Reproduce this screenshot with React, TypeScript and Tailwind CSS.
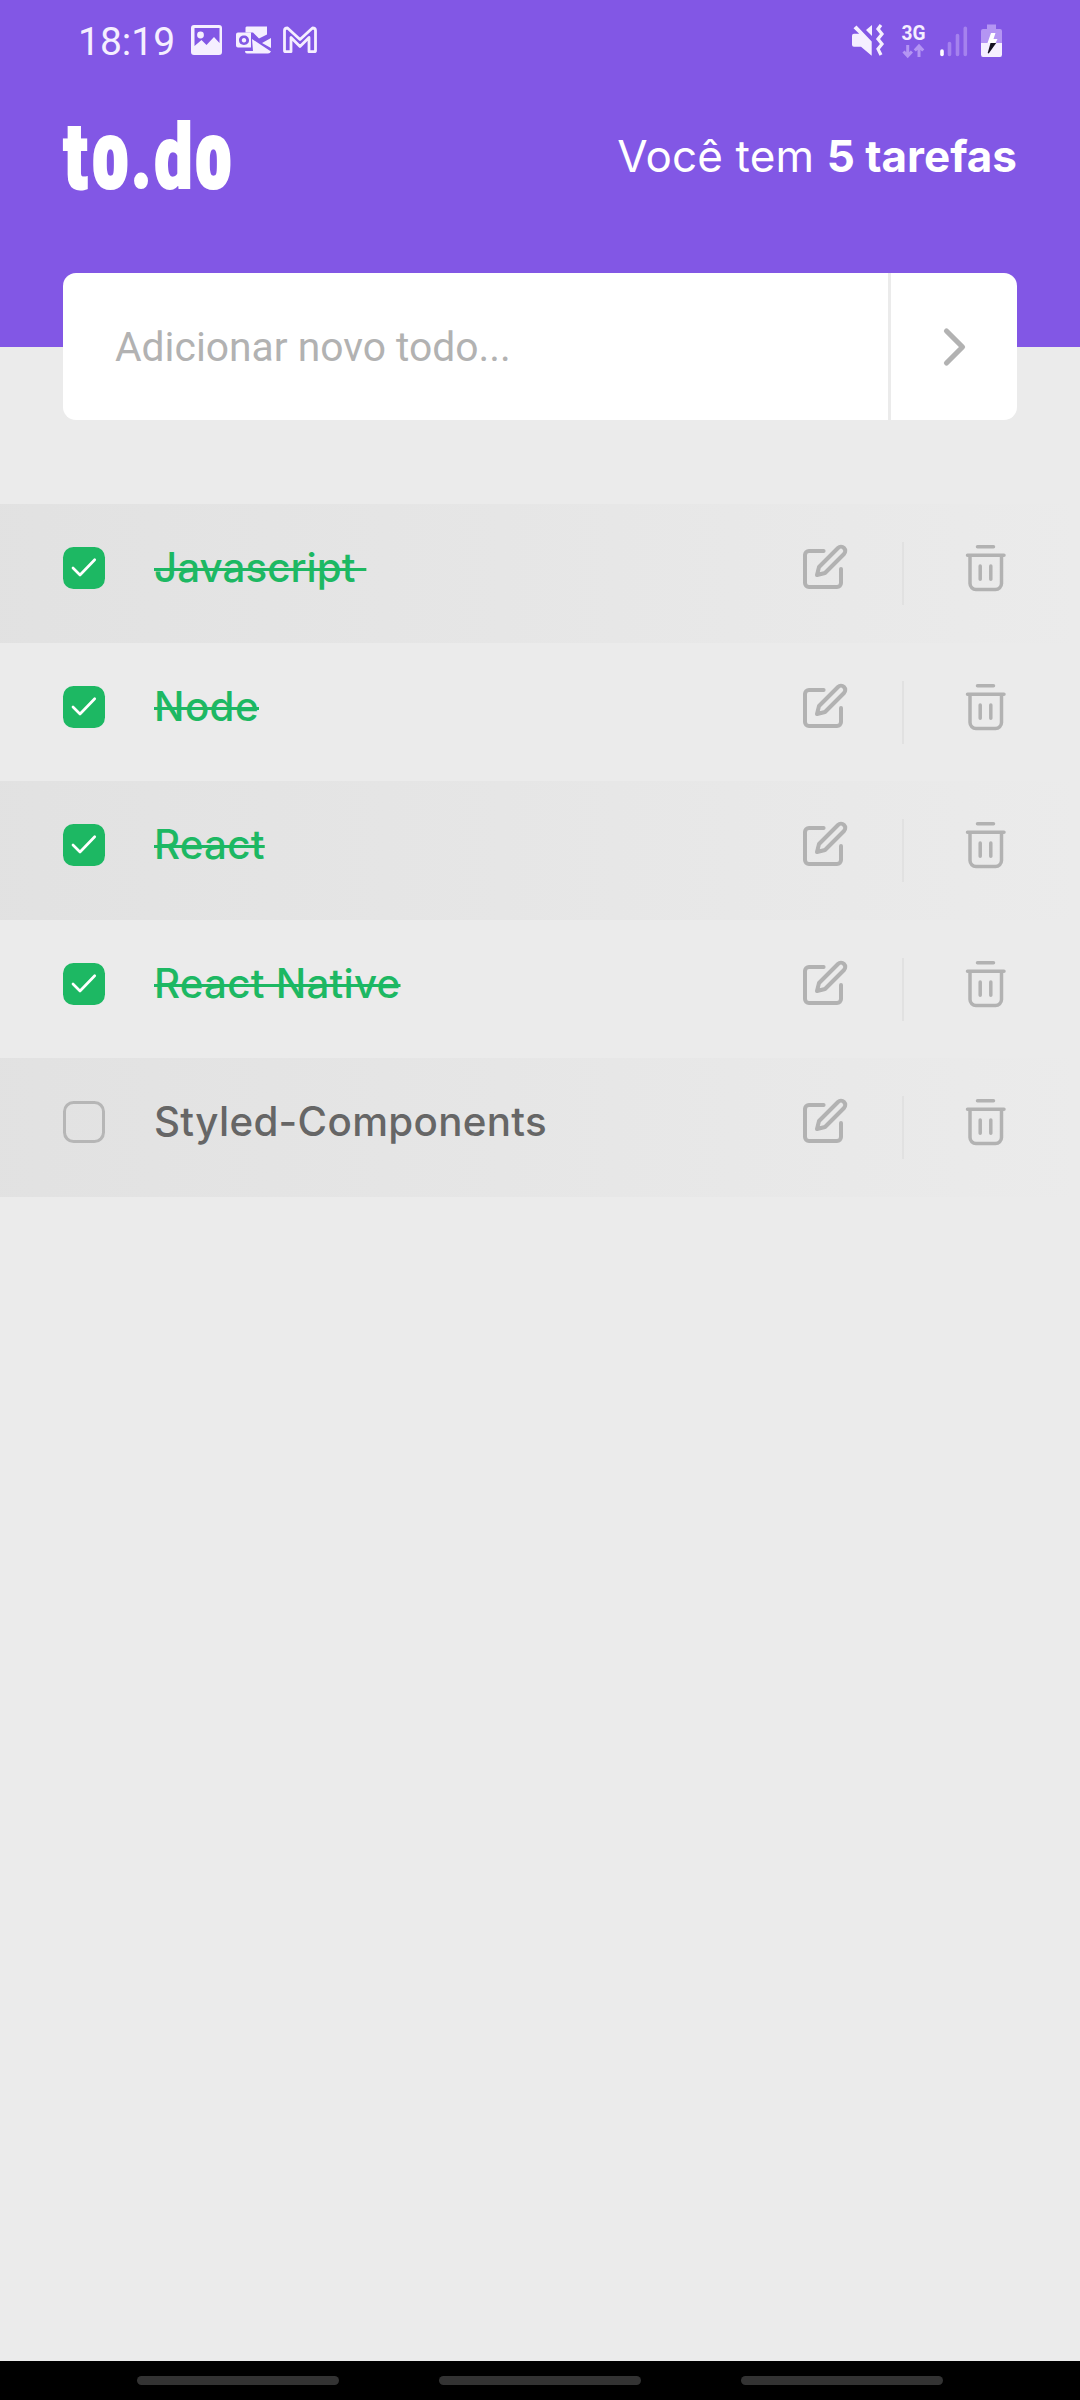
import React from "react";

const tasks = [
  { title: "Javascript ", done: true, tracking: "tracking-[0.050px]" },
  { title: "Node", done: true, tracking: "tracking-[0.400px]" },
  { title: "React", done: true, tracking: "tracking-[0.250px]" },
  { title: "React Native", done: true, tracking: "tracking-[0.250px]" },
  { title: "Styled-Components", done: false, tracking: "tracking-[0.330px]" },
];

function StatusBar() {
  return (
    <div className="flex h-[82px] items-start justify-between pl-[78px] pr-[75px] text-[#f5efff]">
      <div className="flex items-start">
        <span className="mt-[19px] w-[112px] whitespace-nowrap font-['Roboto',sans-serif] text-[39px] leading-[46px]">18:19</span>
        <svg className="mt-[20px]" width="150" height="40" viewBox="190 20 150 40" fill="currentColor">
          <path fillRule="evenodd" d="M194 25h25a3 3 0 0 1 3 3v24a3 3 0 0 1-3 3h-25a3 3 0 0 1-3-3V28a3 3 0 0 1 3-3zM194.500 28v18l7-6 5 5 7.500-8 5.500 6V28z" />
          <circle cx="200.500" cy="35" r="3.400" />
          <path d="M246.500 26.500h20.500v8l-8 4-6-6h-7.500v-5zM252 39l19 12.500q-1 2-3 2h-21q-2 0-2-2.500h8zM271 38v10l-9-5z" />
          <path fillRule="evenodd" d="M238 32.500h13v15h-13q-2 0-2-2v-11q0-2 2-2zm6 3c-3 0-5 2-5 4.800s2 4.700 5 4.700 5-2 5-4.700-2-4.800-5-4.800zm0 2.500c1.500 0 2.200 1 2.200 2.300s-.7 2.200-2.200 2.200-2.200-.9-2.200-2.200.7-2.300 2.200-2.300z" />
          <path d="M284.500 50.500V30.500q0-2.500 3-2.500l12.500 11.500 12.500-11.500q3 0 3 2.500v20q0 1.200-1.200 1.200h-5.300V37.500L300 46.500l-9-9v14.200h-5.300q-1.200 0-1.200-1.200z" fill="none" stroke="currentColor" strokeWidth="2.800" strokeLinejoin="round" />
        </svg>
      </div>
      <svg className="mt-[15px]" width="155" height="50" viewBox="850 15 155 50" fill="currentColor">
        <path d="M853.500 28.300l3-2.800 15.200 16v14.300l-10.700-9.100h-7q-2 0-2-2v-9q0-2 2-2h5.200zM866 30l6-5v11z" />
        <path d="M881 25l-3 4 4 5-4 5 4 5-4 5 3 6" fill="none" stroke="currentColor" strokeWidth="3.200" />
        <text x="901.500" y="39.700" fontFamily="Roboto" fontWeight="700" fontSize="19.500" textLength="24" lengthAdjust="spacingAndGlyphs">3G</text>
        <g fill="none" stroke="#b495f3" strokeWidth="3">
          <path d="M907.700 45v11M903.500 51.500l4.200 4.500 4.200-4.500M919 57V46M914.800 50.500L919 46l4.200 4.500" />
        </g>
        <g strokeLinecap="round" strokeWidth="3.600">
          <path d="M942 51v3.500" stroke="#fff" />
          <path d="M949.500 43.500v11M957.500 35.500v19M965.300 28.200v26.300" stroke="#a582ee" />
        </g>
        <path d="M987 29v-4.500h9V29h4q2 0 2 2v12h-21V31q0-2 2-2z" fill="#b495f3" />
        <path d="M981 43h21v11.500q0 2.500-2 2.500h-17q-2 0-2-2.500z" />
        <path d="M991 33h4.500l-2 6h4l-2 4h-8z" fill="#fff" />
        <path d="M990.500 43h5.700l-7.500 10.500-1-.5z" fill="#141021" />
      </svg>
    </div>
  );
}

function Logo() {
  return (
    <svg className="h-[80px] w-[176px]" viewBox="60 115 176 80" fill="#fff" role="img" overflow="visible">
      <g transform="translate(63.300 187.700) scale(0.77 1)">
        <text y="0" fontFamily="Roboto" fontWeight="900" fontSize="96.500" stroke="#fff" strokeWidth="2" style={{ fontStretch: "78%" }}>
          <tspan x="0" fontSize="92.500" style={{ fontStretch: "100%" }}>t</tspan>
          <tspan x="37.300">o</tspan>
          <tspan x="88" fontSize="88">.</tspan>
          <tspan x="118" fontSize="88.500" style={{ fontStretch: "88%" }}>d</tspan>
          <tspan x="171">o</tspan>
        </text>
      </g>
    </svg>
  );
}

function EditIcon() {
  return (
    <svg width="50" height="50" viewBox="0 0 25 25" fill="none" stroke="#b2b2b2" strokeWidth="2" strokeLinecap="round" strokeLinejoin="round">
      <path d="M11.300 4H4a2 2 0 0 0-2 2v14a2 2 0 0 0 2 2h14a2 2 0 0 0 2-2v-7" />
      <path d="M18.500 2.500a2.121 2.121 0 0 1 3 3L12 15l-4 1 1-4z" />
    </svg>
  );
}

function TrashIcon() {
  return (
    <svg width="42" height="50" viewBox="965 543 42 50" fill="none" stroke="#b2b2b2" strokeWidth="3.500" strokeLinecap="round" strokeLinejoin="round">
      <path d="M977.500 546.800h16M967.500 555.300h36.500M970 555.300v28.200a6 6 0 0 0 6 6h19.500a6 6 0 0 0 6-6v-28.200M980.200 566v13.200M990.800 566v13.200" />
    </svg>
  );
}

type TaskRowProps = { title: string; done: boolean; tracking: string; striped: boolean };

function TaskRow({ title, done, tracking, striped }: TaskRowProps) {
  return (
    <li className={"flex h-[138.600px] items-start " + (striped ? "bg-[linear-gradient(90deg,rgba(196,196,196,0.24),rgba(196,196,196,0))]" : "")}>
      <span
        className={
          "ml-[63px] mt-[43px] flex size-[42px] shrink-0 items-center justify-center rounded-[10.500px] " +
          (done ? "bg-[#1db863]" : "border-[3px] border-[#b6b6b6]")
        }
      >
        {done && (
          <svg width="42" height="42" viewBox="0 0 42 42" fill="none" stroke="#fff" strokeWidth="2.700" strokeLinecap="round" strokeLinejoin="round">
            <path d="M10 21l7 7L31.700 12.800" />
          </svg>
        )}
      </span>
      <span
        className={
          "ml-[49px] mt-[40px] w-[647px] whitespace-pre font-['Inter',sans-serif] text-[40.300px] font-medium leading-[48px] " +
          tracking +
          (done ? " text-[#1db863] line-through decoration-[2.600px]" : " text-[#666666]")
        }
      >
        {title}
      </span>
      <span className="mt-[39px]"><EditIcon /></span>
      <span className="ml-[51px] mt-[38px] h-[63px] w-[2px] bg-[#e1e1e1]" />
      <span className="ml-[61px] mt-[39px]"><TrashIcon /></span>
    </li>
  );
}

export default function App() {
  return (
    <div className="flex h-[2400px] w-[1080px] flex-col overflow-hidden bg-[#ebebeb]">
      <header className="h-[347px] shrink-0 bg-[#8257e5]">
        <StatusBar />
        <div className="flex items-start justify-between pl-[60px] pr-[63px] pt-[33px]">
          <Logo />
          <p className="mt-[14px] whitespace-nowrap font-['Inter',sans-serif] text-[44px] leading-[54px] text-white">
            <span className="tracking-[0.150px]">Você tem </span><b className="font-bold">5 tarefas</b>
          </p>
        </div>
      </header>
      <div className="relative mx-[63px] -mt-[74px] flex h-[147px] shrink-0 overflow-hidden rounded-[13px] bg-white">
        <div className="flex flex-1 items-center border-r-[3px] border-[#ebebeb] pl-[52px] pt-[2px] font-['Roboto',sans-serif] text-[40.800px] text-[#b2b2b2]">
          Adicionar novo todo...
        </div>
        <div className="flex w-[126px] items-center justify-center">
          <svg width="30" height="44" viewBox="0 0 30 44" fill="none" stroke="#b2b2b2" strokeWidth="5.200" strokeLinecap="round" strokeLinejoin="round">
            <path d="M7.500 6l16 16-16 16" />
          </svg>
        </div>
      </div>
      <ul className="mt-[84px] flex-1">
        {tasks.map((task, i) => (
          <TaskRow key={task.title} {...task} striped={i % 2 === 0} />
        ))}
      </ul>
      <nav className="flex h-[39px] shrink-0 items-start justify-center gap-[100px] bg-black pt-[15px]">
        <i className="h-[9px] w-[202px] rounded-full bg-[#333333]" />
        <i className="h-[9px] w-[202px] rounded-full bg-[#333333]" />
        <i className="h-[9px] w-[202px] rounded-full bg-[#333333]" />
      </nav>
    </div>
  );
}
